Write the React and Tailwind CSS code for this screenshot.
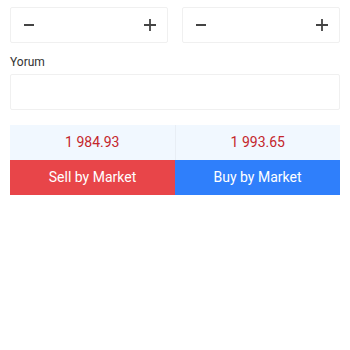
export default function App() {
  const font = { fontFamily: 'Roboto, "Liberation Sans", sans-serif' };
  const Stepper = () => (
    <div className="flex-1 h-[36px] border border-[#f0f0f0] rounded-[2px] flex items-center justify-between pl-[12px] pr-[10px]">
      <svg width="12" height="12" viewBox="0 0 12 12"><path d="M1 6h10" stroke="#444" strokeWidth="2" /></svg>
      <svg width="14" height="14" viewBox="0 0 14 14"><path d="M1 7h12M7 1v12" stroke="#444" strokeWidth="1.8" /></svg>
    </div>
  );
  return (
    <div className="w-[350px] h-[350px] bg-white px-[10px] pt-[7px]" style={font}>
      <div className="flex gap-[14px]">
        <Stepper />
        <Stepper />
      </div>
      <div className="mt-[12px] text-[12px] leading-[14px] text-[#333]">Yorum</div>
      <div className="mt-[5px] h-[36px] border border-[#f0f0f0] rounded-[2px]" />
      <div className="mt-[15px] flex h-[35px] bg-[#f1f8ff]">
        <div className="flex-1 flex items-center justify-center text-[14px] text-[#c4262c] border-r border-[#e8eef5]">1 984.93</div>
        <div className="flex-1 flex items-center justify-center text-[14px] text-[#c4262c]">1 993.65</div>
      </div>
      <div className="flex h-[35px]">
        <div className="flex-1 flex items-center justify-center text-[14px] text-white bg-[#e84549]">Sell by Market</div>
        <div className="flex-1 flex items-center justify-center text-[14px] text-white bg-[#2f7ffb]">Buy by Market</div>
      </div>
    </div>
  );
}
